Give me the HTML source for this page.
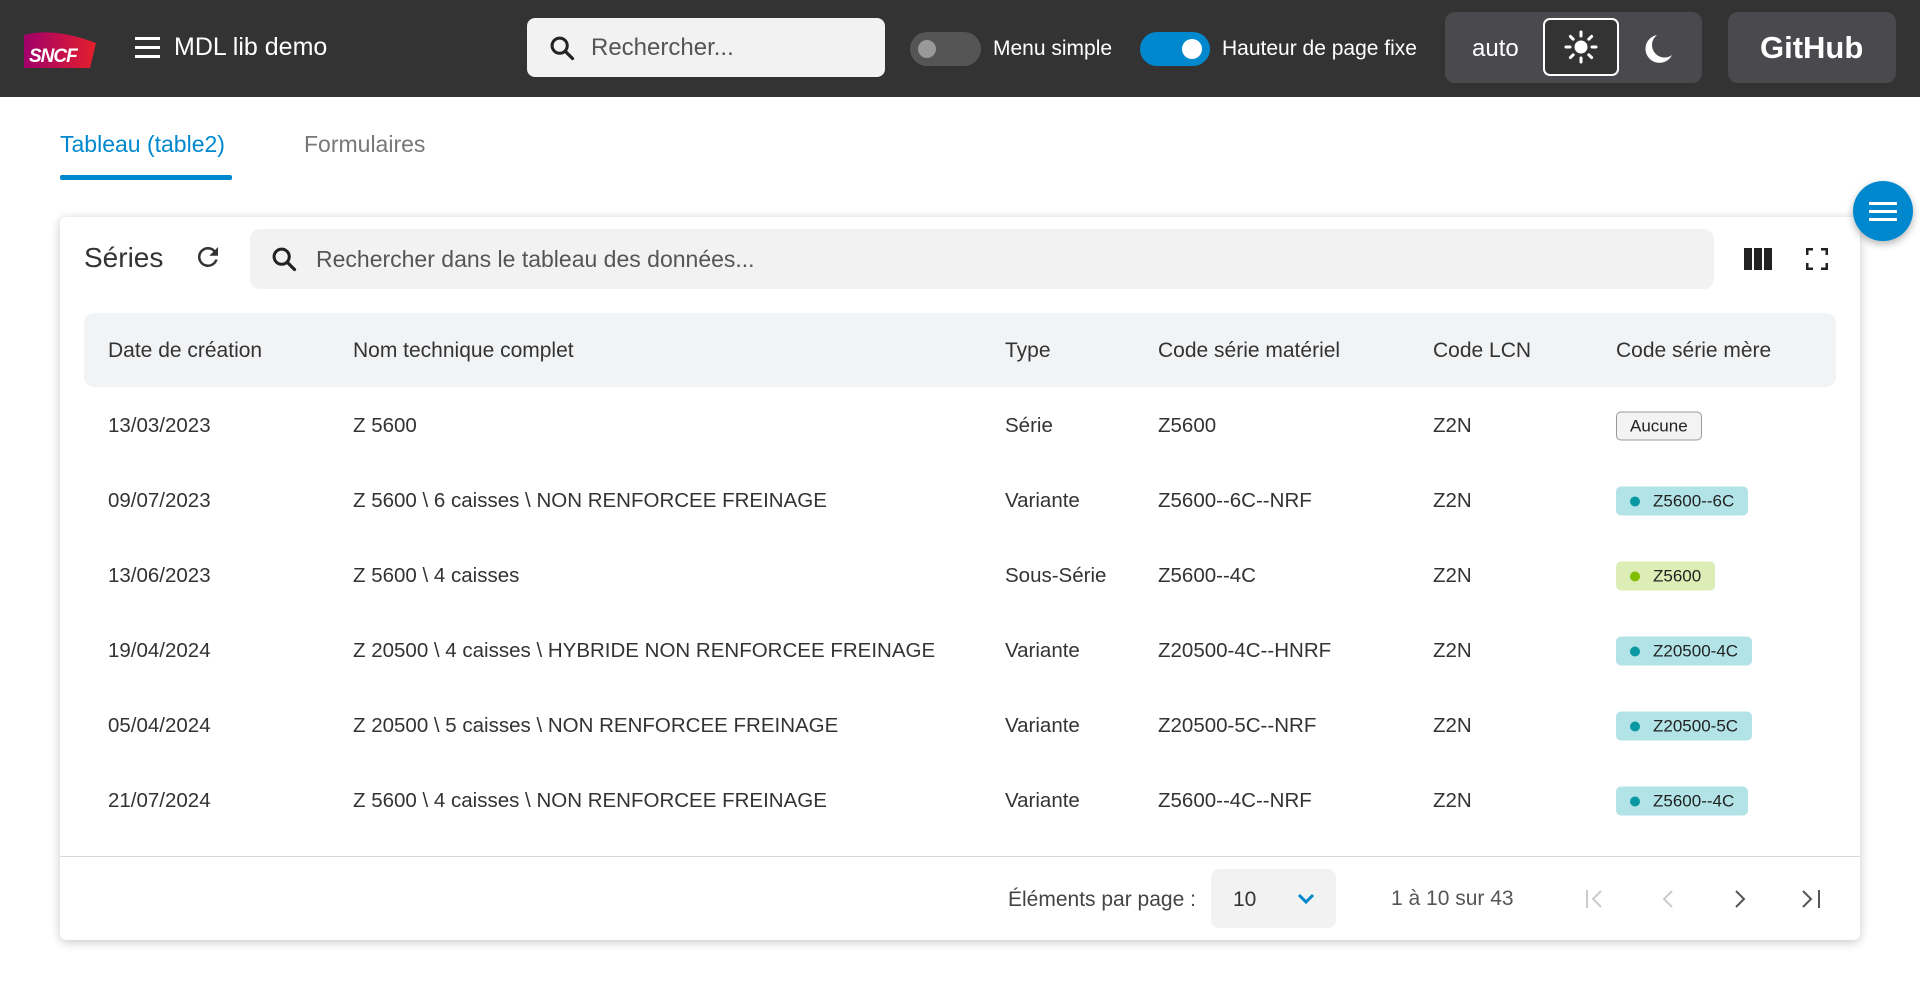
<!DOCTYPE html>
<html><head><meta charset="utf-8"><style>
*{box-sizing:border-box;margin:0;padding:0}
body{width:1920px;height:1000px;background:#fff;font-family:"Liberation Sans",sans-serif;color:#333;position:relative;overflow:hidden}
.abs{position:absolute}
header{position:absolute;left:0;top:0;width:1920px;height:97px;background:#333}
.t{white-space:nowrap}
.card{left:60px;top:217px;width:1800px;height:723px;background:#fff;border-radius:6px;box-shadow:0 2px 10px rgba(0,0,0,.22)}
.row{position:absolute;left:0;width:100%;height:75px;font-size:20.5px;color:#333}
.row span{position:absolute;top:50%;transform:translateY(-50%);white-space:nowrap}
.badge{position:absolute;top:50%;transform:translateY(-50%);height:29px;border-radius:5px;font-size:17px;line-height:29px;padding:0 14px 0 37px;color:#222}
.badge:before{content:"";position:absolute;left:14px;top:10px;width:10px;height:10px;border-radius:50%;background:#0a98a3}
.teal{background:#b2e3e6}
.green{background:#dcedb5}
.green:before{background:#82be00}
</style></head><body>
<header>
  <svg class="abs" style="left:24px;top:31px" width="72" height="37" viewBox="0 0 72 37">
    <defs><linearGradient id="g" x1="0" x2="1"><stop offset="0" stop-color="#a1006b"/><stop offset="1" stop-color="#e4202c"/></linearGradient></defs>
    <path d="M0 4 Q30 -4 72 12 L66 37 L0 37 Z" fill="url(#g)"/>
    <text x="5" y="31" fill="#fff" font-family="Liberation Sans" font-weight="bold" font-style="italic" font-size="19" letter-spacing="-1">SNCF</text>
  </svg>
  <div class="abs" style="left:135px;top:37px;width:25px;height:3px;background:#fff;box-shadow:0 9px 0 #fff,0 18px 0 #fff"></div>
  <div class="abs t" style="left:174px;top:33px;font-size:25px;color:#fff">MDL lib demo</div>
  <div class="abs" style="left:527px;top:18px;width:358px;height:59px;background:#f2f2f2;border-radius:8px"></div>
  <svg class="abs" style="left:548px;top:34px" width="28" height="28" viewBox="0 0 24 24"><circle cx="10" cy="10" r="6.5" fill="none" stroke="#222" stroke-width="2.6"/><path d="M15 15 L21 21" stroke="#222" stroke-width="2.8" stroke-linecap="round"/></svg>
  <div class="abs t" style="left:591px;top:34px;font-size:24px;color:#555">Rechercher...</div>
  <div class="abs" style="left:910px;top:32px;width:71px;height:34px;background:#555;border-radius:17px"><div class="abs" style="left:8px;top:8px;width:18px;height:18px;border-radius:50%;background:#999"></div></div>
  <div class="abs t" style="left:993px;top:37px;font-size:21px;color:#fff">Menu simple</div>
  <div class="abs" style="left:1140px;top:32px;width:70px;height:34px;background:#0088ce;border-radius:17px"><div class="abs" style="left:42px;top:7px;width:20px;height:20px;border-radius:50%;background:#fff"></div></div>
  <div class="abs t" style="left:1222px;top:37px;font-size:21px;color:#fff">Hauteur de page fixe</div>
  <div class="abs" style="left:1445px;top:12px;width:257px;height:71px;background:#4a4a4e;border-radius:10px"></div>
  <div class="abs t" style="left:1472px;top:35px;font-size:24px;color:#fff">auto</div>
  <div class="abs" style="left:1543px;top:18px;width:76px;height:58px;border:2px solid #fff;border-radius:7px;background:#333"></div>
  <svg class="abs" style="left:1563px;top:29px" width="36" height="36" viewBox="0 0 36 36" stroke="#fff" stroke-width="3" stroke-linecap="round"><circle cx="18" cy="18" r="6.5" fill="#fff" stroke="none"/><path d="M18 3v4M18 29v4M3 18h4M29 18h4M7.4 7.4l2.8 2.8M25.8 25.8l2.8 2.8M7.4 28.6l2.8-2.8M25.8 10.2l2.8-2.8"/></svg>
  <svg class="abs" style="left:1644px;top:33px" width="30" height="32" viewBox="0 0 30 32"><path d="M13 2 A14 14 0 1 0 28 22 A11 11 0 0 1 13 2Z" fill="#fff"/></svg>
  <div class="abs" style="left:1728px;top:12px;width:168px;height:71px;background:#4a4a4e;border-radius:10px"></div>
  <div class="abs t" style="left:1760px;top:30px;font-size:31px;font-weight:bold;color:#fff">GitHub</div>
</header>

<div class="abs t" style="left:60px;top:131px;font-size:23px;color:#0088ce">Tableau (table2)</div>
<div class="abs" style="left:60px;top:175px;width:172px;height:5px;background:#0088ce;border-radius:2px"></div>
<div class="abs t" style="left:304px;top:131px;font-size:23px;color:#777">Formulaires</div>

<div class="abs card">
  <div class="abs t" style="left:24px;top:25px;font-size:28px;color:#333">Séries</div>
  <svg class="abs" style="left:133px;top:25px" width="30" height="30" viewBox="0 0 24 24"><path d="M17.65 6.35A7.96 7.96 0 0 0 12 4a8 8 0 1 0 7.73 10h-2.08A6 6 0 1 1 12 6c1.66 0 3.14.69 4.22 1.78L13 11h7V4l-2.35 2.35z" fill="#333"/></svg>
  <div class="abs" style="left:190px;top:12px;width:1464px;height:60px;background:#f2f2f2;border-radius:10px"></div>
  <svg class="abs" style="left:210px;top:28px" width="28" height="28" viewBox="0 0 24 24"><circle cx="10" cy="10" r="6.5" fill="none" stroke="#222" stroke-width="2.6"/><path d="M15 15 L21 21" stroke="#222" stroke-width="2.8" stroke-linecap="round"/></svg>
  <div class="abs t" style="left:256px;top:29px;font-size:23px;color:#555">Rechercher dans le tableau des données...</div>
  <svg class="abs" style="left:1684px;top:31px" width="28" height="22" viewBox="0 0 28 22"><rect x="0" y="0" width="8" height="22" fill="#222"/><rect x="10" y="0" width="8" height="22" fill="#222"/><rect x="20" y="0" width="8" height="22" fill="#222"/></svg>
  <svg class="abs" style="left:1746px;top:31px" width="22" height="22" viewBox="0 0 22 22" fill="none" stroke="#222" stroke-width="3"><path d="M1 7V1h6M15 1h6v6M21 15v6h-6M7 21H1v-6"/></svg>

  <div class="abs" style="left:24px;top:96px;width:1752px;height:74px;background:#f2f3f5;border-radius:10px"></div>
  <div class="row" style="top:96px;font-size:21px;color:#333">
    <span style="left:48px">Date de création</span><span style="left:293px">Nom technique complet</span><span style="left:945px">Type</span><span style="left:1098px">Code série matériel</span><span style="left:1373px">Code LCN</span><span style="left:1556px">Code série mère</span>
  </div>
  <div class="row" style="top:171px"><span style="left:48px">13/03/2023</span><span style="left:293px">Z 5600</span><span style="left:945px">Série</span><span style="left:1098px">Z5600</span><span style="left:1373px">Z2N</span><span style="left:1556px;height:29px;line-height:27px;border:1px solid #999;background:#f3f3f3;border-radius:5px;padding:0 13px;font-size:17px;color:#222">Aucune</span></div>
  <div class="row" style="top:246px"><span style="left:48px">09/07/2023</span><span style="left:293px">Z 5600 \ 6 caisses \ NON RENFORCEE FREINAGE</span><span style="left:945px">Variante</span><span style="left:1098px">Z5600--6C--NRF</span><span style="left:1373px">Z2N</span><div class="badge teal" style="left:1556px">Z5600--6C</div></div>
  <div class="row" style="top:321px"><span style="left:48px">13/06/2023</span><span style="left:293px">Z 5600 \ 4 caisses</span><span style="left:945px">Sous-Série</span><span style="left:1098px">Z5600--4C</span><span style="left:1373px">Z2N</span><div class="badge green" style="left:1556px">Z5600</div></div>
  <div class="row" style="top:396px"><span style="left:48px">19/04/2024</span><span style="left:293px">Z 20500 \ 4 caisses \ HYBRIDE NON RENFORCEE FREINAGE</span><span style="left:945px">Variante</span><span style="left:1098px">Z20500-4C--HNRF</span><span style="left:1373px">Z2N</span><div class="badge teal" style="left:1556px">Z20500-4C</div></div>
  <div class="row" style="top:471px"><span style="left:48px">05/04/2024</span><span style="left:293px">Z 20500 \ 5 caisses \ NON RENFORCEE FREINAGE</span><span style="left:945px">Variante</span><span style="left:1098px">Z20500-5C--NRF</span><span style="left:1373px">Z2N</span><div class="badge teal" style="left:1556px">Z20500-5C</div></div>
  <div class="row" style="top:546px"><span style="left:48px">21/07/2024</span><span style="left:293px">Z 5600 \ 4 caisses \ NON RENFORCEE FREINAGE</span><span style="left:945px">Variante</span><span style="left:1098px">Z5600--4C--NRF</span><span style="left:1373px">Z2N</span><div class="badge teal" style="left:1556px">Z5600--4C</div></div>

  <div class="abs" style="left:0;top:639px;width:100%;height:1px;background:#d6d6d6"></div>
  <div class="abs t" style="left:948px;top:671px;font-size:21px;color:#444">Éléments par page :</div>
  <div class="abs" style="left:1151px;top:652px;width:125px;height:59px;background:#f2f2f2;border-radius:8px"></div>
  <div class="abs t" style="left:1173px;top:671px;font-size:21px;color:#333">10</div>
  <svg class="abs" style="left:1236px;top:675px" width="20" height="14" viewBox="0 0 20 14"><path d="M3 3l7 7 7-7" fill="none" stroke="#0088ce" stroke-width="3"/></svg>
  <div class="abs t" style="left:1331px;top:670px;font-size:21px;color:#555">1 à 10 sur 43</div>
  <svg class="abs" style="left:1524px;top:671px" width="24" height="22" viewBox="0 0 24 22" fill="none" stroke="#ccc" stroke-width="2"><path d="M3 2v18M17 3l-8 8 8 8"/></svg>
  <svg class="abs" style="left:1598px;top:671px" width="20" height="22" viewBox="0 0 20 22" fill="none" stroke="#ccc" stroke-width="2"><path d="M14 3l-8 8 8 8"/></svg>
  <svg class="abs" style="left:1670px;top:671px" width="20" height="22" viewBox="0 0 20 22" fill="none" stroke="#555" stroke-width="2"><path d="M6 3l8 8-8 8"/></svg>
  <svg class="abs" style="left:1739px;top:671px" width="24" height="22" viewBox="0 0 24 22" fill="none" stroke="#555" stroke-width="2"><path d="M4 3l8 8-8 8M20 2v18"/></svg>
</div>

<div class="abs" style="left:1853px;top:181px;width:60px;height:60px;border-radius:50%;background:#0088ce;box-shadow:0 3px 8px rgba(0,0,0,.3)"></div>
<div class="abs" style="left:1869px;top:202px;width:28px;height:3px;background:#fff;box-shadow:0 8px 0 #fff,0 16px 0 #fff"></div>
</body></html>
